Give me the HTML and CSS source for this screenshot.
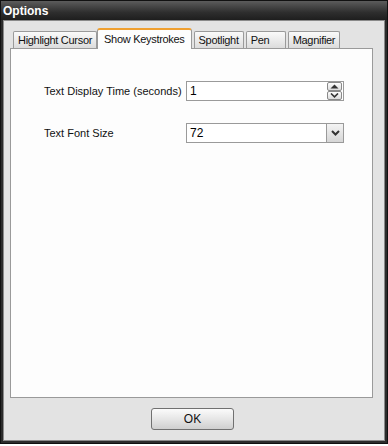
FILE: index.html
```html
<!DOCTYPE html>
<html lang="en">
<head>
  <meta charset="UTF-8" />
  <title>Options</title>
  <link rel="stylesheet" href="styles.css">
</head>
<body>
  <div class="window">
    <div class="titlebar">Options</div>
    <div class="client">
      <div class="tabs">
        <div class="tab">Highlight Cursor</div>
        <div class="tab selected">Show Keystrokes</div>
        <div class="tab">Spotlight</div>
        <div class="tab">Pen</div>
        <div class="tab">Magnifier</div>
      </div>
      <div class="panel">
        <div class="row">
          <label class="label">Text Display Time (seconds)</label>
          <div class="field spin">
            <span class="value">1</span>
            <div class="spin-btns">
              <span class="spin-btn">
                <svg width="9" height="5" viewBox="0 0 9 5"><path d="M0.5 4.5 L4.5 0.5 L8.5 4.5 Z" fill="#333"/></svg>
              </span>
              <span class="spin-btn">
                <svg width="9" height="5" viewBox="0 0 9 5"><path d="M1 0.5 L4.5 3.8 L8 0.5" fill="none" stroke="#333" stroke-width="1.6"/></svg>
              </span>
            </div>
          </div>
        </div>
        <div class="row">
          <label class="label">Text Font Size</label>
          <div class="field combo">
            <span class="value">72</span>
            <span class="drop-btn">
              <svg width="9" height="6" viewBox="0 0 9 6"><path d="M1 1 L4.5 4.5 L8 1" fill="none" stroke="#333" stroke-width="2"/></svg>
            </span>
          </div>
        </div>
      </div>
      <div class="footer">
        <button class="ok-btn">OK</button>
      </div>
    </div>
  </div>
</body>
</html>
```

FILE: styles.css
```css
html, body {
  margin: 0;
  padding: 0;
  background: #ffffff;
}

body {
  font-family: "Liberation Sans", Arial, sans-serif;
  font-size: 11px;
  color: #000;
}

.window {
  width: 388px;
  height: 444px;
  box-sizing: border-box;
  background: #2b2b2b;
  border: 1px solid #111;
  display: flex;
  flex-direction: column;
}

.titlebar {
  height: 19px;
  line-height: 21px;
  padding-left: 2px;
  color: #fff;
  font-weight: bold;
  font-size: 12px;
  background: linear-gradient(#5c5c5c, #2e2e2e 60%, #1e1e1e);
}

.client {
  flex: 1;
  margin: 0 2px 2px 2px;
  background: #e3e3e3;
  border: 1px solid #8a8a8a;
  display: flex;
  flex-direction: column;
  padding: 0 11px 0 6px;
}

.tabs {
  display: flex;
  align-items: flex-end;
  height: 26px;
  padding-left: 3px;
  margin-top: 1px;
  letter-spacing: -0.3px;
}

.tab {
  height: 16px;
  min-width: 30px;
  line-height: 17px;
  padding: 0 4px;
  margin-right: 2px;
  border: 1px solid #9a9a9a;
  border-bottom: none;
  border-radius: 2px 2px 0 0;
  background: linear-gradient(#fafafa, #e8e8e8 60%, #dcdcdc);
  color: #111;
}

.tab:first-child {
  margin-right: 0;
}

.tab.selected {
  height: 19px;
  line-height: 18px;
  padding: 0 6px;
  background: #fdfdfd;
  border-top: 2px solid #f0a030;
  margin: 0 2px 0 0;
  position: relative;
  top: 1px;
  border-radius: 3px 3px 0 0;
}

.panel {
  height: 350px;
  background: #fdfdfd;
  border: 1px solid #9a9a9a;
  padding: 32px 0 0 33px;
  box-sizing: border-box;
}

.row {
  display: flex;
  align-items: center;
  margin-bottom: 22px;
}

.label {
  width: 142px;
  color: #111;
}

.field {
  width: 158px;
  height: 20px;
  box-sizing: border-box;
  border: 1px solid #9a9a9a;
  background: #fff;
  display: flex;
  align-items: center;
  justify-content: space-between;
  padding-left: 3px;
  font-size: 12px;
}

.spin-btns {
  display: flex;
  flex-direction: column;
  margin-right: 1px;
}

.spin-btn {
  width: 13px;
  height: 7px;
  border: 1px solid #8a8a8a;
  border-radius: 2px;
  background: linear-gradient(#fdfdfd, #dcdcdc);
  display: flex;
  align-items: center;
  justify-content: center;
}

.combo {
  padding-right: 0;
}

.drop-btn {
  width: 17px;
  height: 18px;
  box-sizing: border-box;
  border-left: 1px solid #9a9a9a;
  background: linear-gradient(#f4f4f4, #d6d6d6);
  display: flex;
  align-items: center;
  justify-content: center;
}

.footer {
  flex: 1;
  display: flex;
  justify-content: center;
  align-items: flex-start;
  padding-top: 10px;
}

.ok-btn {
  width: 83px;
  height: 22px;
  margin-left: 2px;
  font-family: "Liberation Sans", Arial, sans-serif;
  font-size: 12px;
  color: #111;
  border: 1px solid #707070;
  border-radius: 3px;
  background: linear-gradient(#fbfbfb, #e6e6e6 50%, #cfcfcf);
}
```
